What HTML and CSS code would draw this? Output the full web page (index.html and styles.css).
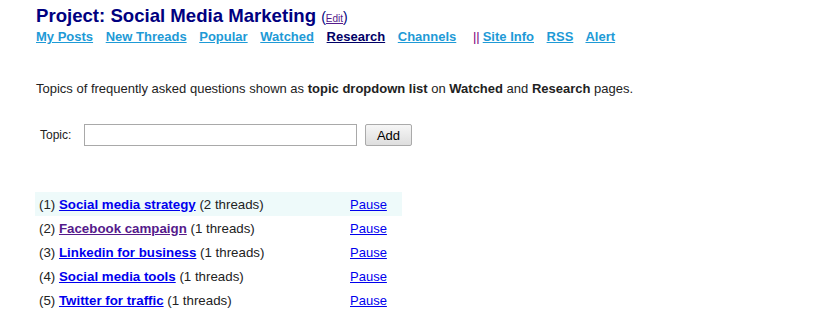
FILE: index.html
```html
<!DOCTYPE html>
<html lang="en">
<head>
    <meta charset="UTF-8">
    <title>Research</title>
    <link rel="stylesheet" href="styles.css">
</head>
<body>
    <div class="page">
        <h1 class="title">Project: Social Media Marketing <span class="edit">(<a href="#">Edit</a>)</span></h1>
        <div class="nav">
            <a href="#">My Posts</a>
            <a href="#">New Threads</a>
            <a href="#">Popular</a>
            <a href="#">Watched</a>
            <a href="#" class="current">Research</a>
            <a href="#">Channels</a>
            <span class="sep">||</span><a href="#" class="after-sep">Site Info</a>
            <a href="#">RSS</a>
            <a href="#">Alert</a>
        </div>

        <p class="intro">Topics of frequently asked questions shown as <b>topic dropdown list</b> on <b>Watched</b> and <b>Research</b> pages.</p>

        <form class="add-form">
            <label for="topic">Topic:</label>
            <input type="text" id="topic">
            <button type="button">Add</button>
        </form>

        <table class="topics">
            <tr class="hl">
                <td>(1) <a href="#" class="topic">Social media strategy</a> (2 threads)</td>
                <td class="act"><a href="#">Pause</a></td>
            </tr>
            <tr>
                <td>(2) <a href="#" class="topic visited">Facebook campaign</a> (1 threads)</td>
                <td class="act"><a href="#">Pause</a></td>
            </tr>
            <tr>
                <td>(3) <a href="#" class="topic">Linkedin for business</a> (1 threads)</td>
                <td class="act"><a href="#">Pause</a></td>
            </tr>
            <tr>
                <td>(4) <a href="#" class="topic">Social media tools</a> (1 threads)</td>
                <td class="act"><a href="#">Pause</a></td>
            </tr>
            <tr>
                <td>(5) <a href="#" class="topic">Twitter for traffic</a> (1 threads)</td>
                <td class="act"><a href="#">Pause</a></td>
            </tr>
        </table>
    </div>
</body>
</html>
```

FILE: styles.css
```css
body{
    margin: 0;
    background-color: #fff;
    font-family: "Liberation Sans", Arial, sans-serif;
    color: #222;
}
.page{
    padding: 6px 0 0 36px;
}
.title{
    margin: 0;
    font-size: 18.6px;
    line-height: 20px;
    color: #000080;
}
.edit{
    font-weight: normal;
    font-size: 14px;
    color: #000080;
}
.edit a{
    font-size: 10px;
    color: #551a8b;
}
.nav{
    font-size: 13px;
    font-weight: bold;
    line-height: 15px;
}
.nav a{
    color: #1e9ad6;
    margin-right: 9px;
}
.nav a.current{
    color: #000066;
}
.nav .sep{
    color: #800080;
    font-weight: normal;
    margin: 0 3px 0 4px;
}
.intro{
    margin: 37px 0 0;
    font-size: 13px;
    line-height: 16px;
}
.add-form{
    margin: 27px 0 0 4px;
    display: flex;
    align-items: center;
    font-size: 12px;
}
.add-form label{
    width: 44px;
}
.add-form input{
    width: 269px;
    height: 18px;
    margin: 0 8px 0 0;
    border: 1px solid #a9a9a9;
    padding: 1px;
}
.add-form button{
    width: 47px;
    height: 22px;
    font-family: "Liberation Sans", Arial, sans-serif;
    font-size: 13px;
    color: #000;
    border: 1px solid #aaa;
    border-radius: 2px;
    background: linear-gradient(#f6f6f6, #dedede);
}
.topics{
    margin-top: 46px;
    margin-left: -1px;
    border-collapse: collapse;
    font-size: 13.3px;
    width: 367px;
}
.topics td{
    height: 24px;
    padding: 0 0 0 4px;
}
.topics tr.hl{
    background-color: #eefafa;
}
.topics a.topic{
    color: #0000ee;
    font-weight: bold;
}
.topics a.visited{
    color: #551a8b;
}
.topics .act{
    width: 52px;
    font-size: 13px;
}
.topics .act a{
    color: #0000ee;
}
```
